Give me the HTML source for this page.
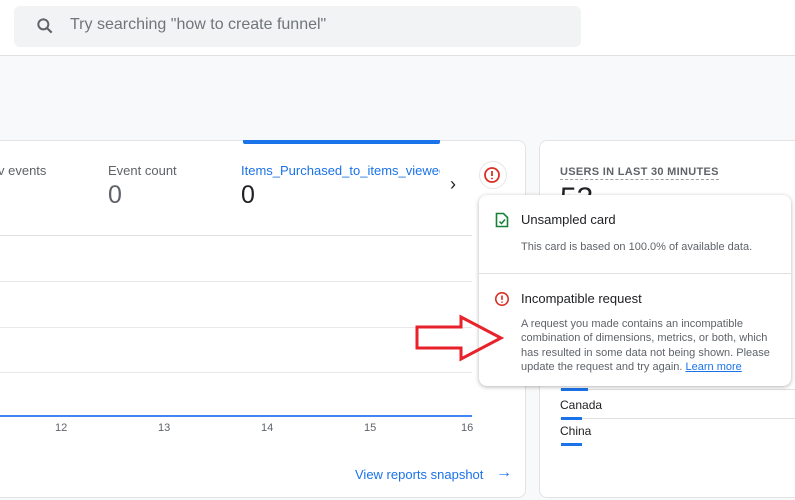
<!DOCTYPE html>
<html><head><style>
body{margin:0;width:795px;height:500px;overflow:hidden;background:#f8f9fa;font-family:"Liberation Sans",sans-serif;position:relative}
.a{position:absolute}
</style></head><body>
<div class="a" style="left:0;top:0;width:795px;height:55px;background:#fff;border-bottom:1px solid #e0e0e0"></div>
<div class="a" style="left:14px;top:6px;width:567px;height:41px;background:#f1f3f4;border-radius:6px"></div>
<svg class="a" style="left:35px;top:16px" width="20" height="20" viewBox="0 0 24 24"><circle cx="10" cy="10" r="6" fill="none" stroke="#5f6368" stroke-width="2.4"/><path d="M14.5 14.5L20 20" stroke="#5f6368" stroke-width="2.6"/></svg>
<div class="a" style="left:70px;top:16px;font-size:16px;color:#70757a">Try searching "how to create funnel"</div>

<div class="a" style="left:-8px;top:140px;width:532px;height:356px;background:#fff;border:1px solid #e3e3e3;border-radius:8px"></div>
<div class="a" style="left:243px;top:140px;width:197px;height:4px;background:#1a73e8;border-radius:0 0 2px 2px"></div>
<div class="a" style="left:-2px;top:163px;font-size:13px;color:#5f6368">v events</div>
<div class="a" style="left:108px;top:163px;font-size:13px;color:#5f6368">Event count</div>
<div class="a" style="left:108px;top:181px;font-size:25px;color:#5f6368">0</div>
<div class="a" style="left:241px;top:163px;width:199px;overflow:hidden;white-space:nowrap;font-size:13px;color:#1a73e8">Items_Purchased_to_items_viewed</div>
<div class="a" style="left:241px;top:181px;font-size:25px;color:#202124">0</div>
<div class="a" style="left:450px;top:174px;font-size:18px;color:#202124">›</div>
<div class="a" style="left:479px;top:161px;width:26px;height:26px;border-radius:50%;border:1px solid #e6e6e6;background:#fff"></div>
<svg class="a" style="left:483px;top:166px" width="18" height="18" viewBox="0 0 18 18"><circle cx="9" cy="9" r="7" fill="none" stroke="#d93025" stroke-width="1.8"/><path d="M9 5v5M9 11.8v1.4" stroke="#d93025" stroke-width="1.8"/></svg>
<div class="a" style="left:0;top:235px;width:472px;height:1px;background:#e0e0e0"></div>
<div class="a" style="left:0;top:281px;width:472px;height:1px;background:#e8e8e8"></div>
<div class="a" style="left:0;top:327px;width:472px;height:1px;background:#e8e8e8"></div>
<div class="a" style="left:0;top:372px;width:472px;height:1px;background:#e8e8e8"></div>
<div class="a" style="left:0;top:415px;width:472px;height:2px;background:#4285f4"></div>
<div class="a" style="left:55px;top:422px;font-size:11px;color:#5f6368">12</div>
<div class="a" style="left:158px;top:422px;font-size:11px;color:#5f6368">13</div>
<div class="a" style="left:261px;top:422px;font-size:11px;color:#5f6368">14</div>
<div class="a" style="left:364px;top:422px;font-size:11px;color:#5f6368">15</div>
<div class="a" style="left:461px;top:422px;font-size:11px;color:#5f6368">16</div>
<div class="a" style="left:355px;top:467px;font-size:13px;color:#1a73e8">View reports snapshot</div>
<div class="a" style="left:496px;top:464px;font-size:16px;color:#1a73e8">→</div>

<div class="a" style="left:539px;top:140px;width:270px;height:356px;background:#fff;border:1px solid #e3e3e3;border-radius:8px"></div>
<div class="a" style="left:560px;top:166px;font-size:11px;font-weight:bold;color:#5f6368;letter-spacing:.3px;border-bottom:1px dashed #9aa0a6;padding-bottom:1px">USERS IN LAST 30 MINUTES</div>
<div class="a" style="left:560px;top:182px;font-size:30px;color:#202124">53</div>
<div class="a" style="left:560px;top:389px;width:235px;height:1px;background:#e0e0e0"></div>
<div class="a" style="left:561px;top:388px;width:27px;height:3px;background:#1a73e8"></div>
<div class="a" style="left:560px;top:398px;font-size:12px;color:#202124">Canada</div>
<div class="a" style="left:560px;top:418px;width:235px;height:1px;background:#e0e0e0"></div>
<div class="a" style="left:561px;top:417px;width:21px;height:3px;background:#1a73e8"></div>
<div class="a" style="left:560px;top:424px;font-size:12px;color:#202124">China</div>
<div class="a" style="left:561px;top:443px;width:21px;height:3px;background:#1a73e8"></div>

<div class="a" style="left:479px;top:195px;width:312px;height:191px;background:#fff;border-radius:8px;box-shadow:0 1px 4px rgba(0,0,0,.3)"></div>
<svg class="a" style="left:495px;top:212px" width="14" height="16" viewBox="0 0 14 16"><path d="M1.5 1.5h7l4 4v9h-11z" fill="none" stroke="#188038" stroke-width="1.6"/><path d="M4.5 9.5l2 2 3.5-4" fill="none" stroke="#188038" stroke-width="1.5"/></svg>
<div class="a" style="left:521px;top:212px;font-size:13px;color:#202124">Unsampled card</div>
<div class="a" style="left:521px;top:241px;font-size:11px;color:#5f6368">This card is based on 100.0% of available data.</div>
<div class="a" style="left:479px;top:273px;width:312px;height:1px;background:#e0e0e0"></div>
<svg class="a" style="left:494px;top:291px" width="16" height="16" viewBox="0 0 18 18"><circle cx="9" cy="9" r="7" fill="none" stroke="#d93025" stroke-width="1.8"/><path d="M9 5v5M9 11.8v1.4" stroke="#d93025" stroke-width="1.8"/></svg>
<div class="a" style="left:521px;top:291px;font-size:13px;color:#202124">Incompatible request</div>
<div class="a" style="left:521px;top:317px;width:262px;font-size:11px;line-height:14.3px;color:#5f6368">A request you made contains an incompatible combination of dimensions, metrics, or both, which has resulted in some data not being shown. Please update the request and try again. <span style="color:#1a73e8;text-decoration:underline">Learn more</span></div>

<svg class="a" style="left:414px;top:314px" width="92" height="48" viewBox="0 0 92 48"><path d="M3 13h44V3l40 21-40 21V34H3z" fill="none" stroke="#e8222a" stroke-width="3" stroke-linejoin="miter"/></svg>
</body></html>
